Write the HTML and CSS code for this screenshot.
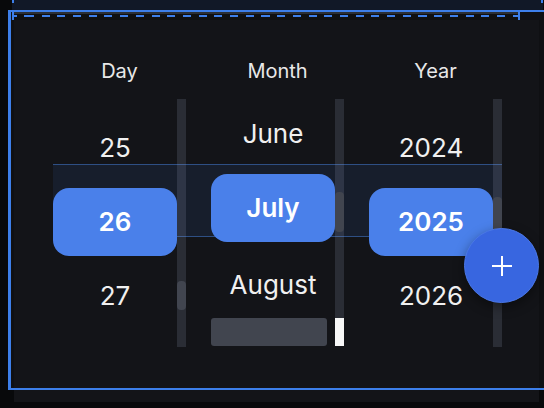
FILE: index.html
```html
<!DOCTYPE html>
<html>
<head>
<meta charset="utf-8">
<link rel="stylesheet" href="styles.css">
</head>
<body>
<div class="prev"><div class="prev-edge"></div></div>
<div class="frame">
  <div class="head"><div class="head-line"></div><div class="head-dash"></div></div>
  <div class="picker">
    <div class="band"></div>

    <div class="col">
      <div class="col-title">Day</div>
      <div class="scroller">
        <div class="list list-pad">
          <div class="item">25</div>
          <div class="item item-sel"><span class="pill">26</span></div>
          <div class="item">27</div>
        </div>
        <div class="track"><div class="thumb thumb-day"></div></div>
      </div>
    </div>

    <div class="col">
      <div class="col-title">Month</div>
      <div class="scroller scroller-grid">
        <div class="list list-month">
          <div class="item item-first">June</div>
          <div class="item item-sel"><span class="pill">July</span></div>
          <div class="item item-last">August</div>
        </div>
        <div class="track"><div class="thumb thumb-month"></div></div>
        <div class="hbar"><div class="hthumb"></div></div>
        <div class="corner"></div>
      </div>
    </div>

    <div class="col">
      <div class="col-title">Year</div>
      <div class="scroller">
        <div class="list list-pad">
          <div class="item">2024</div>
          <div class="item item-sel"><span class="pill">2025</span></div>
          <div class="item">2026</div>
        </div>
        <div class="track"><div class="thumb thumb-year"></div></div>
      </div>
    </div>

    <button class="fab" aria-label="Add">
      <svg width="22" height="22" viewBox="0 0 22 22"><path d="M11 1v20M1 11h20" stroke="#ffffff" stroke-width="2" fill="none"/></svg>
    </button>
  </div>
</div>
</body>
</html>
```
FILE: styles.css
```css
html {
  overflow: hidden;
  background: #08090b;
}
body {
  margin: 0;
  min-height: 408px;
  background: #08090b;
  font-family: Inter, "Noto Sans", sans-serif;
}

.prev {
  margin-left: 12px;
  width: 531px;
  height: 10px;
  background: #111827;
}
.prev-edge {
  height: 3px;
  border-left: 2px solid #3d7fea;
  border-right: 2px solid #3d7fea;
}

.frame {
  position: relative;
  margin: 2px 0 0 11px;
  width: 540px;
  height: 376px;
  background: #0f1013;
}
.frame::after {
  content: "";
  position: absolute;
  left: -3px;
  top: -2px;
  right: -2px;
  bottom: -2px;
  border: 2px solid #3d7fea;
  border-left-width: 3px;
  pointer-events: none;
  z-index: 5;
}

.head {
  margin-left: 1px;
  width: 508px;
  height: 8px;
  box-sizing: border-box;
  border-left: 2px solid #3d7fea;
  border-right: 2px solid #3d7fea;
}
.head-line {
  margin-top: 2px;
  height: 2px;
  background: #2b2f36;
}
.head-dash {
  margin-top: 1px;
  height: 2px;
  background: repeating-linear-gradient(90deg, #3d7fea 0 8px, transparent 8px 15.7px);
  background-position: 12px 0;
}

.picker {
  position: relative;
  margin-left: 3px;
  width: 525px;
  height: 382px;
  box-sizing: border-box;
  padding: 39px 0 0 39px;
  background: #131418;
  display: flex;
  gap: 25px;
}

.band {
  position: absolute;
  left: 39px;
  top: 144px;
  width: 449px;
  height: 73px;
  box-sizing: border-box;
  background: #171e2c;
  border-top: 1px solid #2e4f84;
  border-bottom: 1px solid #2e4f84;
}

.col {
  position: relative;
  width: 133px;
}
.col-title {
  text-align: center;
  font-size: 20px;
  line-height: 24px;
  font-weight: 400;
  color: #e8e8e8;
  margin-bottom: 16px;
}

.scroller {
  display: flex;
  height: 248px;
}
.scroller-grid {
  display: grid;
  grid-template-columns: 124px 9px;
  grid-template-rows: 219px 29px;
}

.list {
  width: 124px;
  overflow: hidden;
  box-sizing: border-box;
}
.list-pad {
  padding-top: 12px;
}
.item {
  height: 74px;
  line-height: 74px;
  text-align: center;
  font-size: 26px;
  color: #f0f0f0;
}
.item-first {
  margin-top: -2px;
}
.item-last {
  padding-top: 3px;
}
.item-sel {
  box-sizing: border-box;
  padding: 3px 0;
}
.pill {
  display: block;
  height: 68px;
  line-height: 68px;
  border-radius: 16px;
  background: #4a80ea;
  color: #ffffff;
  font-weight: 600;
}

.track {
  width: 9px;
  background: rgba(160, 170, 200, 0.17);
}
.thumb {
  background: #41454f;
  border-radius: 4px;
}
.thumb-day { margin-top: 182px; height: 29px; }
.thumb-month { margin-top: 93px; height: 40px; }
.thumb-year { margin-top: 98px; height: 58px; }

.hbar {
  padding-bottom: 1px;
}
.hthumb {
  width: 116px;
  height: 28px;
  background: #41454f;
  border-radius: 3px;
}
.corner {
  height: 28px;
  background: #f7f7f7;
}

.fab {
  position: absolute;
  left: 450px;
  top: 208px;
  width: 75px;
  height: 75px;
  padding: 0;
  border-radius: 50%;
  border: 1px solid #4a77e6;
  background: #3866e0;
  box-shadow: 0 4px 12px rgba(0, 0, 0, 0.4);
  display: flex;
  align-items: center;
  justify-content: center;
  z-index: 3;
}
.fab svg {
  display: block;
}
```
